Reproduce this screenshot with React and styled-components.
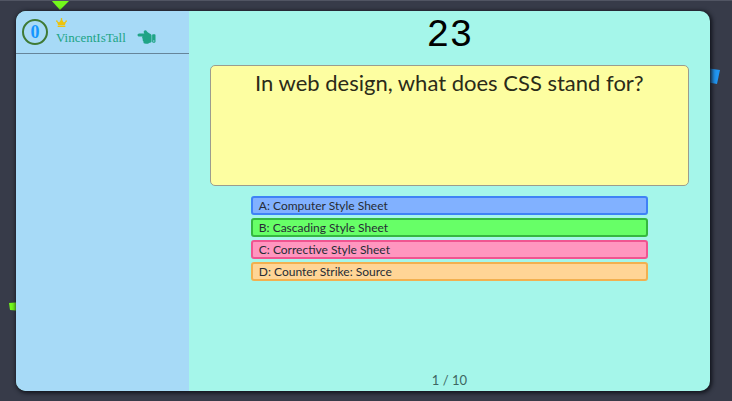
import React from "react";
import styled, { createGlobalStyle } from "styled-components";
import { FaCrown, FaHandPointLeft } from "react-icons/fa";

const GlobalStyle = createGlobalStyle`
  *, *::before, *::after { box-sizing: border-box; }
  body { margin: 0; background: #373b49; font-family: Lato, "Open Sans", sans-serif; }
`;

const Page = styled.div`
  position: relative;
  display: flex;
  min-height: 100vh;
  padding: 10px 22px 10px 16px;
  border-top: 1px solid #515563;
  overflow: hidden;
`;

const Confetti = styled.svg`
  position: absolute;
  overflow: visible;
  fill: ${({ $color }) => $color};
  top: ${({ $top }) => $top}px;
  left: ${({ $left }) => $left};
  right: ${({ $right }) => $right};
`;

const Card = styled.div`
  position: relative;
  flex: 1;
  display: flex;
  border-radius: 10px;
  overflow: hidden;
  background: #a5f6ea;
  box-shadow: 1px 1px 4px 1px #10131b;
`;

const Sidebar = styled.aside`
  flex: 0 0 24.9%;
  background: #a7daf7;
`;

const Player = styled.div`
  display: flex;
  align-items: center;
  height: 43px;
  padding-left: 6px;
  border-bottom: 1px solid #66859a;
  color: #20a486;
`;

const Score = styled.div`
  display: grid;
  place-items: center;
  width: 26px;
  height: 26px;
  border: 2px solid #3f7a35;
  border-radius: 50%;
  color: #1596ff;
  font: bold 18px/20px "Liberation Serif", serif;
`;

const PlayerInfo = styled.div`
  display: flex;
  flex-direction: column;
  align-items: flex-start;
  margin: 0 11px 0 8px;
`;

const Crown = styled(FaCrown)`
  width: 11px;
  height: 9px;
  margin-top: 3px;
  color: #edc30b;
`;

const PlayerName = styled.span`
  font: 13px/22px "Liberation Serif", serif;
`;

const Hand = styled(FaHandPointLeft)`
  width: 19px;
  height: 18px;
  margin-top: 10px;
`;

const Game = styled.main`
  flex: 1;
  min-width: 0;
  display: flex;
  flex-direction: column;
  align-items: center;
`;

const Timer = styled.div`
  height: 54px;
  color: #000;
  font: 38px/50px "Liberation Mono", monospace;
`;

const Question = styled.h1`
  width: 92%;
  height: 121px;
  margin: 0;
  padding: 3px 8px;
  border: 1px solid #9b9d8e;
  border-radius: 5px;
  background: #fdfea1;
  color: #2b2b18;
  font-size: 22px;
  font-weight: 400;
  line-height: 28px;
  text-align: center;
`;

const Answers = styled.div`
  display: flex;
  flex-direction: column;
  gap: 3px;
  width: 100%;
  margin-top: 10px;
  padding: 0 62px;
`;

const Answer = styled.button`
  height: 19px;
  padding: 0 6px;
  border: 2px solid ${({ $edge }) => $edge};
  border-radius: 3px;
  background: ${({ $fill }) => $fill};
  color: #262c35;
  font: 12px/15px Lato, sans-serif;
  text-align: left;
  cursor: pointer;
`;

const Progress = styled.footer`
  margin-top: auto;
  color: #3d6661;
  font-size: 13px;
  line-height: 22px;
`;

const answers = [
  { text: "A: Computer Style Sheet", fill: "#81b1ff", edge: "#3f82f6" },
  { text: "B: Cascading Style Sheet", fill: "#67ff67", edge: "#35b840" },
  { text: "C: Corrective Style Sheet", fill: "#ff96bf", edge: "#f05490" },
  { text: "D: Counter Strike: Source", fill: "#ffd596", edge: "#f2b050" },
];

export default function App() {
  return (
    <>
      <GlobalStyle />
      <Page>
        <Confetti $color="#73f91b" $top={-1} $left="51px" width="19" height="10" aria-hidden="true">
          <path d="M0 0H19L9 10Z" />
        </Confetti>
        <Confetti $color="#2196f3" $top={67} $right="12px" width="14" height="17" aria-hidden="true">
          <path d="M0 0L14 2L11 16L0 14Z" />
        </Confetti>
        <Confetti $color="#73f91b" $top={301} $left="9px" width="12" height="9" aria-hidden="true">
          <path d="M0 1L12 0V9L1 8Z" />
        </Confetti>
        <Card>
          <Sidebar>
            <Player>
              <Score>0</Score>
              <PlayerInfo>
                <Crown aria-hidden="true" />
                <PlayerName>VincentIsTall</PlayerName>
              </PlayerInfo>
              <Hand aria-hidden="true" />
            </Player>
          </Sidebar>
          <Game>
            <Timer>23</Timer>
            <Question>In web design, what does CSS stand for?</Question>
            <Answers>
              {answers.map(({ text, fill, edge }) => (
                <Answer key={text} type="button" $fill={fill} $edge={edge}>
                  {text}
                </Answer>
              ))}
            </Answers>
            <Progress>1 / 10</Progress>
          </Game>
        </Card>
      </Page>
    </>
  );
}
